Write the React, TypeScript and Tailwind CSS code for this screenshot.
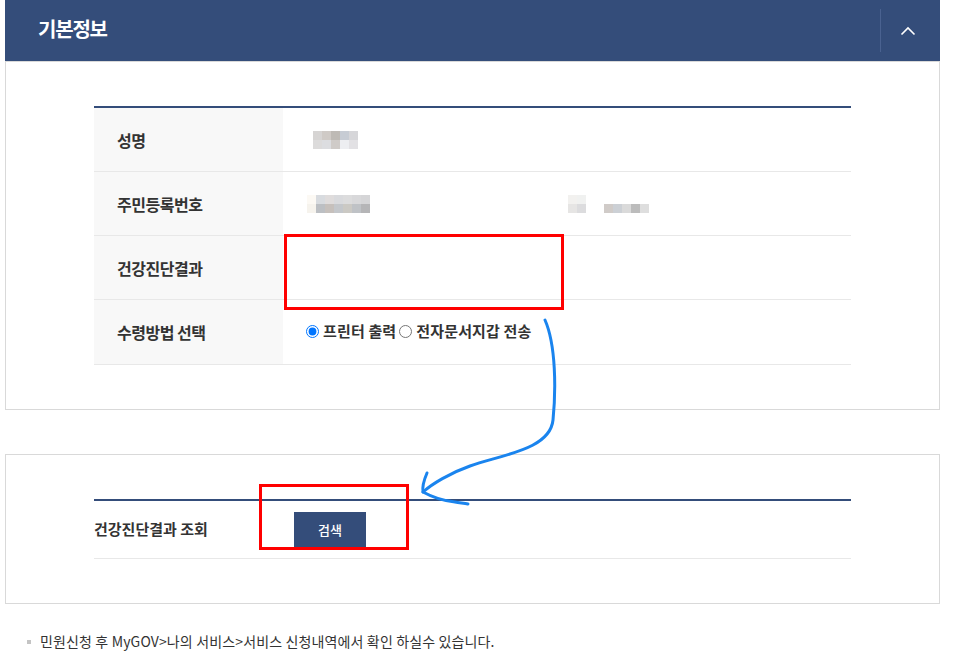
import React from "react";

const nameBlocks = [
  ["#d6d4d3", "#cfcac6", "#bebab5", "#c7ccd4", "#d6d6d9"],
  ["#dcdbdb", "#dcdde0", "#cfcbc8", "#edeef1", "#e2e1e4"],
];
const rrn1 = [
  ["#fcf9f4", "#d8dbdf", "#dfdcdc", "#d9dadd", "#dcdcdd", "#d8d8da", "#d5d5d7"],
  ["#f6f3ed", "#bcbfc3", "#c6c0bc", "#c4c7cb", "#cbc9c4", "#bfc2c6", "#b5b5b7"],
];
const rrn2 = [
  ["#f2f1ef", "#f0f1f0"],
  ["#e6e5e4", "#dcdcde"],
];
const rrn3 = [["#d0cbc8", "#ccd0d5", "#dadada", "#bcbcbc", "#dedede"]];

function Mosaic({ rows }: { rows: string[][] }) {
  return (
    <div className="flex flex-col">
      {rows.map((r, i) => (
        <div key={i} className="flex">
          {r.map((c, j) => (
            <div key={j} className="w-[9px] h-[9px]" style={{ backgroundColor: c }} />
          ))}
        </div>
      ))}
    </div>
  );
}

function Row({ label, children, last }: { label: string; children?: React.ReactNode; last?: boolean }) {
  return (
    <div className={`flex ${last ? "h-[65px]" : "h-[64px]"} border-b border-[#e8e8e8]`}>
      <div className="w-[189px] shrink-0 bg-[#f8f8f8] flex items-center pl-[23px] text-[16px] font-bold text-[#333] tracking-[-0.03em]">
        {label}
      </div>
      <div className="flex-1 flex items-center">{children}</div>
    </div>
  );
}

export default function App() {
  return (
    <div className="relative w-[956px] h-[662px] bg-white overflow-hidden font-['Noto_Sans_CJK_KR','Noto_Sans',sans-serif] text-[#333]">
      <div className="pl-[5px] pr-[16px]">
        {/* Header */}
        <div className="h-[61px] bg-[#344d7a] flex items-center justify-between pl-[33px]">
          <h2 className="text-white text-[20px] font-bold tracking-[-0.06em] -mt-[3px]">기본정보</h2>
          <div className="flex items-center h-full">
            <div className="w-px h-[43px] bg-[#4a6290]" />
            <div className="w-[53px] mr-[6px] flex items-center justify-center">
              <svg width="16" height="10" viewBox="0 0 16 10">
                <polyline points="1.5,8.5 8,2 14.5,8.5" fill="none" stroke="white" strokeWidth="1.6" />
              </svg>
            </div>
          </div>
        </div>

        {/* Panel 1 */}
        <div className="border border-[#d9d9d9] pt-[44px] pb-[44px] pl-[88px] pr-[88px]">
          <div className="border-t-2 border-[#344d7a]">
            <Row label="성명">
              <div className="pl-[30px]">
                <Mosaic rows={nameBlocks} />
              </div>
            </Row>
            <Row label="주민등록번호">
              <div className="pl-[24px] flex items-end">
                <Mosaic rows={rrn1} />
                <div className="ml-[198px]">
                  <Mosaic rows={rrn2} />
                </div>
                <div className="ml-[18px]">
                  <Mosaic rows={rrn3} />
                </div>
              </div>
            </Row>
            <Row label="건강진단결과" />
            <Row label="수령방법 선택" last>
              <div className="pl-[23px] flex items-center text-[15px] font-bold text-[#333] tracking-[0.01em] -mt-[2px]">
                <input type="radio" name="recv" defaultChecked className="w-[13px] h-[13px] m-0 mr-[4px]" />
                <span>프린터 출력</span>
                <input type="radio" name="recv" className="w-[13px] h-[13px] m-0 ml-[3px] mr-[4px]" />
                <span>전자문서지갑 전송</span>
              </div>
            </Row>
          </div>
        </div>

        {/* Panel 2 */}
        <div className="mt-[44px] border border-[#d9d9d9] pt-[44px] pb-[44px] pl-[88px] pr-[88px]">
          <div className="border-t-2 border-[#344d7a]">
            <div className="flex items-center h-[58px] border-b border-[#e8e8e8]">
              <div className="w-[200px] text-[15px] font-bold text-[#333]">건강진단결과 조회</div>
              <button className="w-[72px] h-[35px] bg-[#344d7a] text-white text-[13px] font-medium">검색</button>
            </div>
          </div>
        </div>

        {/* Footnote */}
        <div className="mt-[27px] flex items-center pl-[22px] text-[14px] text-[#333] tracking-[0.01em]">
          <span className="w-[4px] h-[4px] bg-[#c4c4c4] mr-[9px]" />
          <span>민원신청 후 MyGOV&gt;나의 서비스&gt;서비스 신청내역에서 확인 하실수 있습니다.</span>
        </div>
      </div>

      {/* Annotations */}
      <div className="absolute left-[284px] top-[234px] w-[280px] h-[76px] border-[3px] border-[#ff0000]" />
      <div className="absolute left-[259px] top-[484px] w-[150px] h-[66px] border-[3px] border-[#ff0000]" />
      <svg className="absolute left-0 top-0 pointer-events-none" width="956" height="662" viewBox="0 0 956 662">
        <path
          d="M545 320 C 556 345, 556 390, 553 420 C 550 450, 500 455, 470 466 C 450 473, 432 484, 423 492"
          fill="none"
          stroke="#1a84ee"
          strokeWidth="3"
          strokeLinecap="round"
          strokeLinejoin="round"
        />
        <path
          d="M427 473 C 424 480, 422 486, 423 492 C 432 497, 445 501, 455 502 C 460 503, 464 503, 468 504"
          fill="none"
          stroke="#1a84ee"
          strokeWidth="3"
          strokeLinecap="round"
          strokeLinejoin="round"
        />
      </svg>
    </div>
  );
}
